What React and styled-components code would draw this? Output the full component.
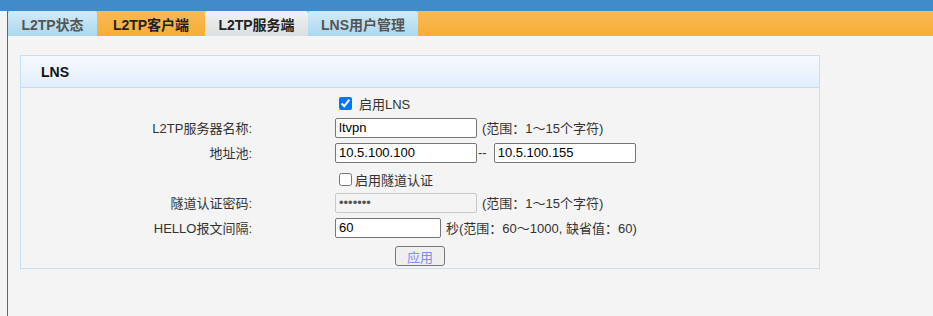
import React, { useState } from "react";
import styled, { createGlobalStyle } from "styled-components";

const font = `"Liberation Sans", "Noto Sans CJK SC", sans-serif`;

const GlobalStyle = createGlobalStyle`
  html, body {
    margin: 0;
    padding: 0;
    background: #f4f4f4;
    font-family: ${font};
    font-size: 13px;
    color: #333;
  }
`;

const TopBar = styled.div`
  height: 11px;
  background: #418bca;
`;

const Main = styled.div`
  margin-left: 7px;
  border-left: 1px solid #1f72d8;
  min-height: 305px;
`;

const TabStrip = styled.div`
  display: flex;
  height: 25px;
  background: linear-gradient(#f9b955, #f7ae36);
`;

const Tab = styled.div`
  display: flex;
  align-items: center;
  justify-content: center;
  width: ${p => p.$w}px;
  height: 25px;
  box-sizing: border-box;
  font-weight: bold;
  font-size: 14px;
  border-radius: 3px 3px 0 0;
  color: ${p => (p.$kind === "blue" ? "#555" : "#222")};
  background: ${p =>
    p.$kind === "blue"
      ? "linear-gradient(#d3eaf6, #a9d9ef)"
      : p.$kind === "active"
      ? "linear-gradient(#eff1f2, #dcdfe1)"
      : "transparent"};
`;

const Panel = styled.div`
  margin: 19px 0 0 12px;
  width: 800px;
  border: 1px solid #c8dff2;
  box-sizing: border-box;
`;

const PanelHead = styled.div`
  height: 31px;
  display: flex;
  align-items: center;
  padding-left: 20px;
  font-weight: bold;
  font-size: 14px;
  color: #111;
  background: linear-gradient(#f7faff, #e2edfb);
  border-bottom: 1px solid #c8dff2;
`;

const PanelBody = styled.div`
  padding: 3px 0 1px;
  display: grid;
  grid-template-columns: 233px 1fr;
  column-gap: 81px;
`;

const Label = styled.div`
  height: ${p => p.$h || 25}px;
  display: flex;
  align-items: center;
  justify-content: flex-end;
  padding-right: 2px;
`;

const Field = styled.div`
  height: ${p => p.$h || 25}px;
  box-sizing: border-box;
  padding-top: ${p => p.$pt || 0}px;
  display: flex;
  align-items: center;
  white-space: nowrap;
`;

const Text = styled.input`
  width: ${p => p.$w || 142}px;
  height: 20px;
  box-sizing: border-box;
  border: 1px solid ${p => (p.disabled ? "#c9c9c9" : "#767676")};
  border-radius: 2px;
  padding: 0 3px;
  margin: 0 5px 0 0;
  font-family: ${font};
  font-size: 13px;
  color: ${p => (p.disabled ? "#555" : "#000")};
  background: ${p => (p.disabled ? "#f4f4f4" : "#fff")};
`;

const Check = styled.input`
  width: 13px;
  height: 13px;
  margin: 0 ${p => p.$gap}px 0 4px;
  accent-color: #0075ff;
`;

const Dash = styled.span`
  margin: 0 7px 0 -4px;
`;

const ButtonRow = styled.div`
  grid-column: 1 / span 2;
  display: flex;
  justify-content: center;
  padding: 6px 0 1px;
`;

const Apply = styled.button`
  width: 50px;
  height: 20px;
  padding: 0;
  border: 1px solid #767676;
  border-radius: 3px;
  background: #efefef;
  color: #7f8cf2;
  font-family: ${font};
  font-size: 13px;
`;

const tabs = [
  { name: "L2TP状态", kind: "blue", w: 89 },
  { name: "L2TP客户端", kind: "orange", w: 108 },
  { name: "L2TP服务端", kind: "active", w: 103 },
  { name: "LNS用户管理", kind: "blue", w: 110 },
];

export default function App() {
  const [lns, setLns] = useState(true);
  const [tunnel, setTunnel] = useState(false);
  return (
    <>
      <GlobalStyle />
      <TopBar />
      <Main>
        <TabStrip>
          {tabs.map(t => (
            <Tab key={t.name} $kind={t.kind} $w={t.w}>
              {t.name}
            </Tab>
          ))}
        </TabStrip>
        <Panel>
          <PanelHead>LNS</PanelHead>
          <PanelBody>
            <Label $h={24} />
            <Field $h={24}>
              <Check type="checkbox" $gap={7} checked={lns} onChange={e => setLns(e.target.checked)} />
              启用LNS
            </Field>

            <Label>L2TP服务器名称:</Label>
            <Field>
              <Text defaultValue="ltvpn" />
              (范围：1～15个字符)
            </Field>

            <Label>地址池:</Label>
            <Field>
              <Text defaultValue="10.5.100.100" />
              <Dash>--</Dash>
              <Text defaultValue="10.5.100.155" />
            </Field>

            <Label />
            <Field $pt={3}>
              <Check type="checkbox" $gap={3} checked={tunnel} onChange={e => setTunnel(e.target.checked)} />
              启用隧道认证
            </Field>

            <Label>隧道认证密码:</Label>
            <Field>
              <Text type="password" disabled defaultValue="1234567" />
              (范围：1～15个字符)
            </Field>

            <Label>HELLO报文间隔:</Label>
            <Field>
              <Text $w={106} defaultValue="60" />
              秒(范围：60～1000, 缺省值：60)
            </Field>

            <ButtonRow>
              <Apply>应用</Apply>
            </ButtonRow>
          </PanelBody>
        </Panel>
      </Main>
    </>
  );
}
